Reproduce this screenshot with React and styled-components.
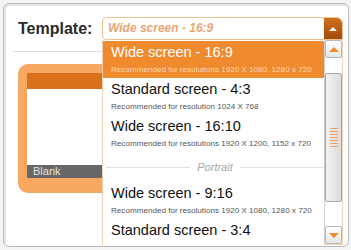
import React from "react";
import { styled, createGlobalStyle } from "styled-components";

const Global = createGlobalStyle`
  html, body { margin: 0; padding: 0; background: #f4f4f4; }
  body { font-family: "Liberation Sans", Arial, sans-serif; }
`;

const Frame = styled.div`
  margin: 3px;
  border: 1px solid #b9b9b9;
  border-radius: 6px;
  background: #fff;
  box-shadow: inset 2px 2px 0 #e6e6e6;
  padding: 13px 0 0 14px;
  width: 330px;
  height: 229px;
  overflow: hidden;
`;

const Header = styled.div`
  display: flex;
  align-items: center;
  gap: 10px;
`;

const Label = styled.div`
  font-size: 16px;
  font-weight: bold;
  color: #2a2a2a;
  width: 74px;
`;

const SelectWrap = styled.div`
  position: relative;
  width: 241px;
  height: 23px;
`;

const SelectBox = styled.div`
  display: flex;
  height: 23px;
  box-sizing: border-box;
  border: 1px solid #f3c090;
  border-radius: 4px 6px 0 4px;
  background: #fff;
  overflow: hidden;
`;

const SelectText = styled.div`
  flex: 1;
  padding-left: 5px;
  font-size: 12px;
  font-weight: bold;
  font-style: italic;
  color: #eaa676;
  line-height: 21px;
`;

const SelectButton = styled.div`
  width: 18px;
  display: flex;
  align-items: center;
  justify-content: center;
  background: linear-gradient(#d0701e, #a24a0e);
  border-radius: 0 5px 0 0;
`;

const Divider = styled.div`
  height: 1px;
  background: #dcdcdc;
  margin: 11px 0 0 -5px;
  width: 330px;
`;

const Card = styled.div`
  margin-top: 12px;
  width: 140px;
  border: 9px solid #f9a862;
  border-bottom-width: 15px;
  border-radius: 10px;
  background: #fff;
  display: flex;
  flex-direction: column;
`;

const CardTop = styled.div`
  height: 16px;
  background: #d8701c;
`;

const CardBody = styled.div`
  height: 76px;
  background: #fff;
`;

const CardLabel = styled.div`
  height: 13px;
  background: #676767;
  color: #e4e4e4;
  font-size: 11px;
  line-height: 13px;
  padding-left: 6px;
`;

const Dropdown = styled.div`
  position: absolute;
  top: 23px;
  left: 0;
  width: 241px;
  height: 205px;
  box-sizing: border-box;
  border: 1px solid #f4d2ae;
  border-top: none;
  background: #fff;
  display: flex;
  z-index: 2;
`;

const List = styled.div`
  flex: 1;
  display: flex;
  flex-direction: column;
  padding-top: 1px;
`;

const Item = styled.div`
  height: 37px;
  flex-shrink: 0;
  box-sizing: border-box;
  padding: 3px 0 0 8px;
  background: ${(p) => (p.$active ? "#ef8a2f" : "#fff")};
`;

const Title = styled.div`
  font-size: 14.5px;
  line-height: 16px;
  color: ${(p) => (p.$active ? "#fff" : "#111")};
`;

const Sub = styled.div`
  margin-top: 5px;
  font-size: 8.1px;
  line-height: 10px;
  white-space: nowrap;
  color: ${(p) => (p.$active ? "#fbd9b8" : "#555")};
`;

const Group = styled.div`
  height: 30px;
  flex-shrink: 0;
  display: flex;
  align-items: center;
  gap: 7px;
  padding: 0 0 0 3px;
  &::before, &::after {
    content: "";
    flex: 1;
    height: 1px;
    background: #e2e2e2;
  }
`;

const GroupText = styled.span`
  font-size: 11px;
  font-style: italic;
  color: #a8a8a8;
`;

const Scrollbar = styled.div`
  width: 17px;
  display: flex;
  flex-direction: column;
  border-left: 1px solid #cfcfcf;
  background: #fafafa;
`;

const ScrollButton = styled.div`
  height: 16px;
  display: flex;
  align-items: center;
  justify-content: center;
  border: 1px solid #b8b8b8;
  border-radius: 2px;
  background: linear-gradient(#ffffff, #e6e6e6);
`;

const Track = styled.div`
  flex: 1;
  display: flex;
  flex-direction: column;
  padding: 15px 0 24px;
  background: #fff;
`;

const Thumb = styled.div`
  flex: 1;
  border: 1px solid #a8a8a8;
  border-radius: 2px;
  background: linear-gradient(90deg, #f2f2f2, #dcdcdc);
  display: flex;
  flex-direction: column;
  align-items: center;
  justify-content: center;
  gap: 2px;
`;

const Grip = styled.div`
  width: 8px;
  height: 1px;
  background: #f0a060;
`;

const Tri = ({ up, color, size = 5 }) => (
  <svg width={size * 2} height={size} viewBox="0 0 10 5">
    <polygon points={up ? "0,5 10,5 5,0" : "0,0 10,0 5,5"} fill={color} />
  </svg>
);

const items = [
  { t: "Wide screen - 16:9", s: "Recommended for resolutions 1920 X 1080, 1280 x 720", active: true },
  { t: "Standard screen - 4:3", s: "Recommended for resolution 1024 X 768" },
  { t: "Wide screen - 16:10", s: "Recommended for resolutions 1920 X 1200, 1152 x 720" },
];

const App = () => (
  <>
    <Global />
    <Frame>
      <Header>
        <Label>Template:</Label>
        <SelectWrap>
          <SelectBox>
            <SelectText>Wide screen - 16:9</SelectText>
            <SelectButton>
              <Tri up color="#fff" size={4} />
            </SelectButton>
          </SelectBox>
          <Dropdown>
            <List>
              {items.map((it) => (
                <Item key={it.t} $active={it.active}>
                  <Title $active={it.active}>{it.t}</Title>
                  <Sub $active={it.active}>{it.s}</Sub>
                </Item>
              ))}
              <Group>
                <GroupText>Portrait</GroupText>
              </Group>
              <Item>
                <Title>Wide screen - 9:16</Title>
                <Sub>Recommended for resolutions 1920 X 1080, 1280 x 720</Sub>
              </Item>
              <Item>
                <Title>Standard screen - 3:4</Title>
              </Item>
            </List>
            <Scrollbar>
              <ScrollButton>
                <Tri up color="#f08a30" />
              </ScrollButton>
              <Track>
                <Thumb>
                  {[0, 1, 2, 3, 4, 5, 6].map((i) => (
                    <Grip key={i} />
                  ))}
                </Thumb>
              </Track>
              <ScrollButton>
                <Tri color="#f08a30" />
              </ScrollButton>
            </Scrollbar>
          </Dropdown>
        </SelectWrap>
      </Header>
      <Divider />
      <Card>
        <CardTop />
        <CardBody />
        <CardLabel>Blank</CardLabel>
      </Card>
    </Frame>
  </>
);

export default App;
